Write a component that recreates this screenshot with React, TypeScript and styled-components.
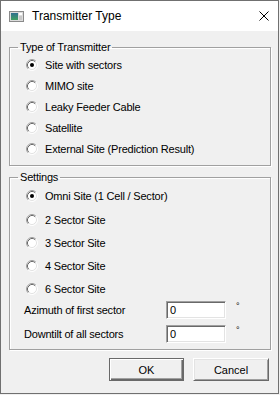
import React, { useState } from "react";
import styled, { createGlobalStyle } from "styled-components";

const GlobalStyle = createGlobalStyle`
  html, body {
    margin: 0;
    padding: 0;
    background: #f0f0f0;
  }
  * {
    box-sizing: border-box;
  }
`;

const Window = styled.div`
  width: 279px;
  height: 394px;
  border: 1px solid #707070;
  display: flex;
  flex-direction: column;
  background: #f0f0f0;
  font-family: "Liberation Sans", Arial, sans-serif;
  font-size: 11px;
  letter-spacing: -0.2px;
  color: #000;
`;

const TitleBar = styled.div`
  height: 30px;
  flex: none;
  background: #fff;
  display: flex;
  align-items: center;
  padding: 0 9px 0 8px;
  font-family: "Liberation Sans", Arial, sans-serif;
  font-size: 12px;
  letter-spacing: 0;
`;

const TitleText = styled.span`
  margin-left: 8px;
  flex: 1;
`;

const Client = styled.div`
  flex: 1;
  padding: 0 7px 0 8px;
  display: flex;
  flex-direction: column;
`;

const GroupBox = styled.fieldset<{ $top: number }>`
  margin: ${(p) => p.$top}px 0 0 0;
  padding: 0 0 6px 0;
  border: 1px solid #a0a0a0;
  box-shadow: inset 1px 1px 0 #fff, 1px 1px 0 #fff;
  min-width: 0;
`;

const Caption = styled.legend`
  margin-left: 8px;
  padding: 0 2px;
  line-height: 13px;
  font-size: 11px;
`;

const OptionRow = styled.label<{ $h: number }>`
  height: ${(p) => p.$h}px;
  display: flex;
  align-items: center;
  gap: 7px;
  padding-left: 16px;
  cursor: default;
`;

const FieldRow = styled.div<{ $top: number }>`
  margin-top: ${(p) => p.$top}px;
  height: 18px;
  display: grid;
  grid-template-columns: 142px 60px auto;
  align-items: center;
  padding-left: 14px;
`;

const Degree = styled.span`
  align-self: start;
  margin-left: 10px;
  font-size: 9px;
  line-height: 10px;
`;

const TextInput = styled.input`
  width: 60px;
  height: 18px;
  margin: 0;
  padding: 0 0 0 3px;
  font-family: "Liberation Sans", Arial, sans-serif;
  font-size: 11px;
  color: #000;
  background: #fff;
  border: 1px solid;
  border-color: #a0a0a0 #fff #fff #a0a0a0;
  box-shadow: inset 1px 1px 0 #696969, inset -1px -1px 0 #e3e3e3;
  outline: none;
`;

const ButtonRow = styled.div`
  margin-top: 8px;
  margin-right: 2px;
  display: flex;
  justify-content: flex-end;
  gap: 9px;
`;

const DlgButton = styled.button<{ $default?: boolean }>`
  width: ${(p) => (p.$default ? 75 : 76)}px;
  height: 23px;
  margin: 0;
  padding: 0;
  font-family: "Liberation Sans", Arial, sans-serif;
  font-size: 11px;
  color: #000;
  background: #f0f0f0;
  border: 1px solid;
  border-color: ${(p) =>
    p.$default ? "#696969" : "#fff #696969 #696969 #fff"};
  box-shadow: ${(p) =>
    p.$default
      ? "inset 1px 1px 0 #fff, inset -1px -1px 0 #696969, inset -2px -2px 0 #a0a0a0"
      : "inset 1px 1px 0 #e3e3e3, inset -1px -1px 0 #a0a0a0"};
`;

const Radio = ({ checked }: { checked: boolean }) => (
  <svg width="12" height="12" viewBox="0 0 12 12" style={{ flex: "none" }}>
    <circle cx="6" cy="6" r="5" fill="#fff" />
    <path d="M2.11 9.89 A5.5 5.5 0 0 1 9.89 2.11" stroke="#a0a0a0" fill="none" />
    <path d="M9.89 2.11 A5.5 5.5 0 0 1 2.11 9.89" stroke="#fff" fill="none" />
    <path d="M2.82 9.18 A4.5 4.5 0 0 1 9.18 2.82" stroke="#696969" fill="none" />
    <path d="M9.18 2.82 A4.5 4.5 0 0 1 2.82 9.18" stroke="#e3e3e3" fill="none" />
    {checked && <circle cx="6" cy="6" r="2" fill="#000" />}
  </svg>
);

const AppIcon = () => (
  <svg width="15" height="11" viewBox="0 0 15 11">
    <rect x="0.5" y="0.5" width="14" height="10" fill="#dcdcdc" stroke="#8a8a8a" />
    <defs>
      <linearGradient id="ico" x1="0" y1="0" x2="0" y2="1">
        <stop offset="0" stopColor="#2f6f8f" />
        <stop offset="1" stopColor="#3fa060" />
      </linearGradient>
    </defs>
    <rect x="2" y="2" width="7" height="7" fill="url(#ico)" />
    <rect x="10" y="2" width="3" height="2" fill="#fff" />
    <rect x="10" y="5" width="3" height="4" fill="#c8c8c8" />
  </svg>
);

const CloseIcon = () => (
  <svg width="10" height="10" viewBox="0 0 10 10">
    <path d="M0.5 0.5 L9.5 9.5 M9.5 0.5 L0.5 9.5" stroke="#000" strokeWidth="1" />
  </svg>
);

const transmitterTypes = [
  "Site with sectors",
  "MIMO site",
  "Leaky Feeder Cable",
  "Satellite",
  "External Site (Prediction Result)",
];

const siteSettings = [
  "Omni Site (1 Cell / Sector)",
  "2 Sector Site",
  "3 Sector Site",
  "4 Sector Site",
  "6 Sector Site",
];

export default function App() {
  const [kind, setKind] = useState(0);
  const [setting, setSetting] = useState(0);
  const [azimuth, setAzimuth] = useState("0");
  const [downtilt, setDowntilt] = useState("0");

  return (
    <>
      <GlobalStyle />
      <Window>
        <TitleBar>
          <AppIcon />
          <TitleText>Transmitter Type</TitleText>
          <CloseIcon />
        </TitleBar>
        <Client>
          <GroupBox $top={10}>
            <Caption>Type of Transmitter</Caption>
            {transmitterTypes.map((t, i) => (
              <OptionRow key={t} $h={21} onClick={() => setKind(i)}>
                <Radio checked={kind === i} />
                {t}
              </OptionRow>
            ))}
          </GroupBox>
          <GroupBox $top={5}>
            <Caption>Settings</Caption>
            {siteSettings.map((t, i) => (
              <OptionRow key={t} $h={i === 0 ? 24 : 23} onClick={() => setSetting(i)}>
                <Radio checked={setting === i} />
                {t}
              </OptionRow>
            ))}
            <FieldRow $top={1}>
              <span>Azimuth of first sector</span>
              <TextInput value={azimuth} onChange={(e) => setAzimuth(e.target.value)} />
              <Degree>°</Degree>
            </FieldRow>
            <FieldRow $top={6}>
              <span>Downtilt of all sectors</span>
              <TextInput value={downtilt} onChange={(e) => setDowntilt(e.target.value)} />
              <Degree>°</Degree>
            </FieldRow>
          </GroupBox>
          <ButtonRow>
            <DlgButton $default>OK</DlgButton>
            <DlgButton>Cancel</DlgButton>
          </ButtonRow>
        </Client>
      </Window>
    </>
  );
}
